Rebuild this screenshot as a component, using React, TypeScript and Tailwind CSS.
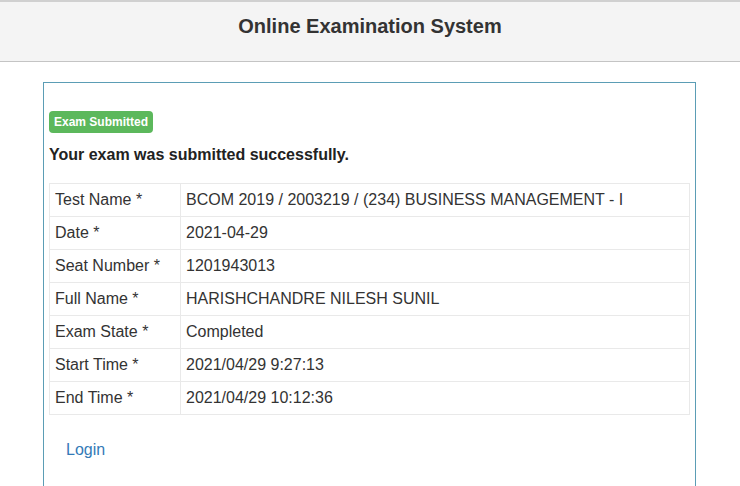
import React from "react";

const rows: [string, string][] = [
  ["Test Name *", "BCOM 2019 / 2003219 / (234) BUSINESS MANAGEMENT - I"],
  ["Date *", "2021-04-29"],
  ["Seat Number *", "1201943013"],
  ["Full Name *", "HARISHCHANDRE NILESH SUNIL"],
  ["Exam State *", "Completed"],
  ["Start Time *", "2021/04/29 9:27:13"],
  ["End Time *", "2021/04/29 10:12:36"],
];

export default function App() {
  return (
    <div
      className="w-[740px] h-[486px] overflow-hidden bg-white text-[#333]"
      style={{ fontFamily: '"Liberation Sans", Arial, sans-serif' }}
    >
      <div className="h-[62px] bg-[#f4f4f4] border-t-2 border-b border-t-[#d0d0d0] border-b-[#c4c4c4] flex items-center justify-center">
        <h1 className="text-[20px] font-bold text-[#333] leading-none -mt-[12px]">Online Examination System</h1>
      </div>
      <div className="mt-[20px] ml-[43px] w-[653px] h-[420px] border border-[#5b9db5] px-[5px] pt-[26px]">
        <span className="inline-block h-[22px] px-[5px] rounded-[4px] bg-[#5cb85c] text-white text-[12px] font-bold leading-[22px]">
          Exam Submitted
        </span>
        <p className="mt-[12px] text-[16px] font-bold leading-[20px] text-[#222]">Your exam was submitted successfully.</p>
        <table className="mt-[18px] w-[641px] border-collapse text-[16px]">
          <tbody>
            {rows.map(([k, v]) => (
              <tr key={k} className="h-[33px]">
                <td className="w-[131px] border border-[#e9e9e9] px-[5px] align-middle">{k}</td>
                <td className="border border-[#e9e9e9] px-[5px] align-middle">{v}</td>
              </tr>
            ))}
          </tbody>
        </table>
        <div className="mt-[23px] pl-[17px]">
          <a href="#" className="text-[16px] text-[#337ab7]">Login</a>
        </div>
      </div>
    </div>
  );
}
